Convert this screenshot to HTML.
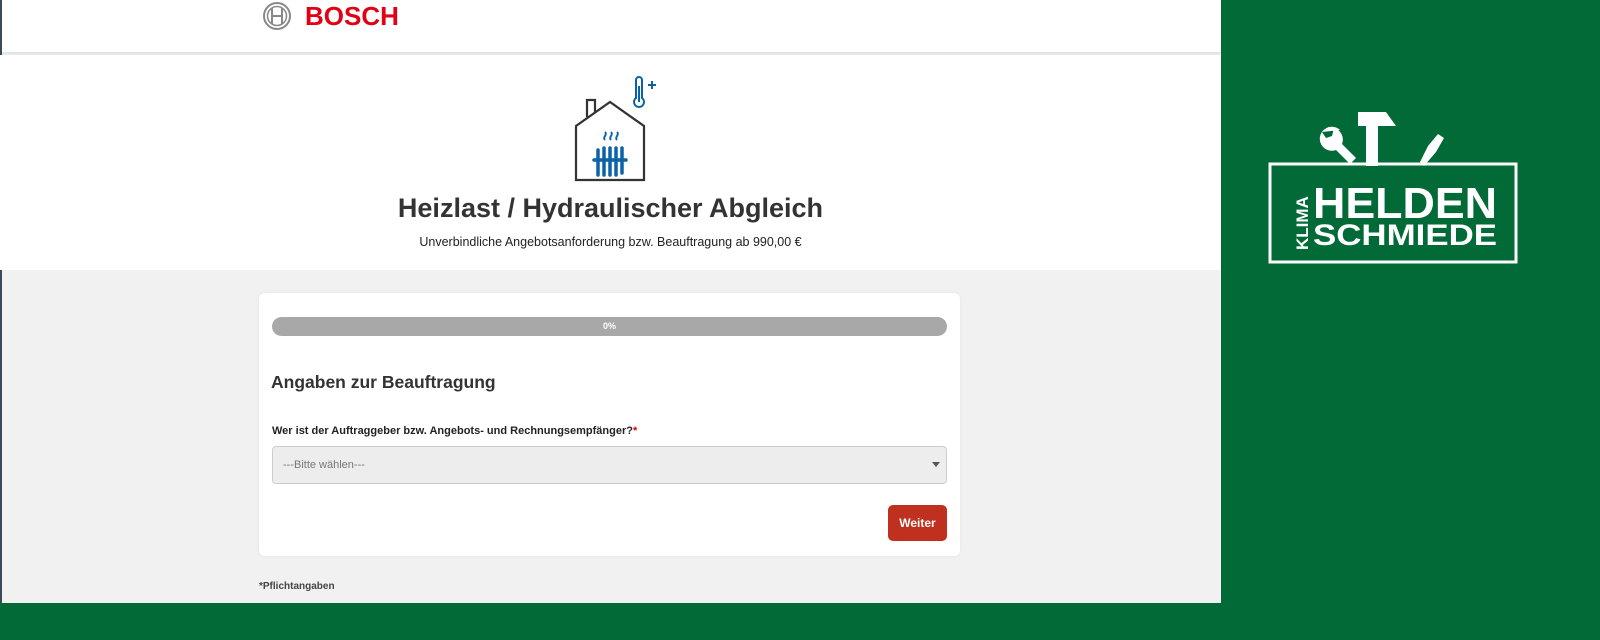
<!DOCTYPE html>
<html><head><meta charset="utf-8"><style>
body{margin:0;width:1600px;height:640px;overflow:hidden;font-family:"Liberation Sans",sans-serif;background:#f1f1f1;position:relative}
.abs{position:absolute}
</style></head><body>
<div class="abs" style="left:0;top:0;width:1221px;height:52px;background:#fff;box-shadow:0 2px 4px rgba(0,0,0,.08)"></div>
<div class="abs" style="left:0;top:0;width:2px;height:603px;background:#3a4a5a"></div>
<svg class="abs" style="left:262px;top:0" width="30" height="33" viewBox="0 0 30 33"><circle cx="15" cy="16" r="13" fill="none" stroke="#888" stroke-width="2"/><circle cx="15" cy="16" r="9.5" fill="none" stroke="#888" stroke-width="1.5"/><path d="M10 8v16M20 8v16M10 16h10" stroke="#888" stroke-width="2" fill="none"/></svg>
<div class="abs" style="left:305px;top:1px;font-size:26px;font-weight:bold;color:#e20015;letter-spacing:0px">BOSCH</div>
<div class="abs" style="left:0;top:55px;width:1221px;height:215px;background:#fff"></div>
<svg class="abs" style="left:560px;top:70px" width="110" height="120" viewBox="0 0 110 120">
<path d="M16 110V56L50 32 84 56V110Z M27 47V30h8v12" fill="none" stroke="#333" stroke-width="2.2"/>
<g fill="none" stroke="#0a63a8" stroke-width="3.5" stroke-linecap="round"><path d="M38 80v25M44 78v27M50 78v27M56 78v27M62 78v25M34 90h32"/></g>
<path d="M45 70c-3-3 3-5 0-8M51 70c-3-3 3-5 0-8M57 70c-3-3 3-5 0-8" stroke="#0a63a8" stroke-width="2" fill="none"/>
<path d="M76 10v18a5 5 0 1 0 6 0V10a3 3 0 0 0-6 0z" fill="none" stroke="#0a63a8" stroke-width="2"/>
<path d="M79 16v16" stroke="#0a63a8" stroke-width="2"/><path d="M88 15h8M92 11v8" stroke="#0a63a8" stroke-width="2"/>
</svg>
<div class="abs" style="left:0;width:1221px;top:193px;text-align:center;font-size:27px;font-weight:bold;color:#333">Heizlast / Hydraulischer Abgleich</div>
<div class="abs" style="left:0;width:1221px;top:235px;text-align:center;font-size:12.5px;color:#222">Unverbindliche Angebotsanforderung bzw. Beauftragung ab 990,00 €</div>
<div class="abs" style="left:259px;top:293px;width:701px;height:263px;background:#fff;border-radius:6px;box-shadow:0 0 4px rgba(0,0,0,.05)"></div>
<div class="abs" style="left:272px;top:317px;width:675px;height:19px;background:#a8a8a8;border-radius:10px;color:#fff;font-size:9px;font-weight:bold;text-align:center;line-height:19px">0%</div>
<div class="abs" style="left:271px;top:372px;font-size:17.5px;font-weight:bold;color:#333">Angaben zur Beauftragung</div>
<div class="abs" style="left:272px;top:425px;font-size:11px;font-weight:bold;color:#222">Wer ist der Auftraggeber bzw. Angebots- und Rechnungsempfänger?<span style="color:#d00">*</span></div>
<div class="abs" style="left:272px;top:446px;width:673px;height:36px;background:#ededed;border:1px solid #ccc;border-radius:4px;font-size:11px;color:#777;line-height:36px;text-indent:10px">---Bitte wählen---</div>
<div class="abs" style="left:932px;top:462px;width:0;height:0;border-left:4px solid transparent;border-right:4px solid transparent;border-top:5px solid #555"></div>
<div class="abs" style="left:888px;top:505px;width:59px;height:36px;background:#c0301e;border-radius:5px;color:#fff;font-size:12px;font-weight:bold;text-align:center;line-height:36px">Weiter</div>
<div class="abs" style="left:259px;top:581px;font-size:10px;font-weight:bold;color:#444">*Pflichtangaben</div>
<div class="abs" style="left:1221px;top:0;width:379px;height:640px;background:#016a36"></div>
<div class="abs" style="left:0;top:603px;width:1600px;height:37px;background:#016a36"></div>
<svg class="abs" style="left:1260px;top:100px" width="270" height="170" viewBox="0 0 270 170">
<g fill="#fff"><path d="M98 12h28l10 14h-18v40h-12V26h-8z"/>
<path d="M80 30a12 12 0 1 0 -4 20l14 14 6-6-14-14a12 12 0 0 0-8-16l-2 8-6 2-4-6z"/>
<path d="M160 62l8-16 10-12 6 4-8 14-12 14z"/></g>
<rect x="10" y="64" width="246" height="98" fill="none" stroke="#fff" stroke-width="3"/>
<text x="53" y="118" font-family="Liberation Sans,sans-serif" font-weight="bold" font-size="44" fill="#fff" textLength="184" lengthAdjust="spacingAndGlyphs">HELDEN</text>
<text x="53" y="145" font-family="Liberation Sans,sans-serif" font-weight="bold" font-size="30" fill="#fff" textLength="184" lengthAdjust="spacingAndGlyphs">SCHMIEDE</text>
<text transform="translate(48 150) rotate(-90)" font-family="Liberation Sans,sans-serif" font-weight="bold" font-size="17" fill="#fff">KLIMA</text>
</svg>
</body></html>
